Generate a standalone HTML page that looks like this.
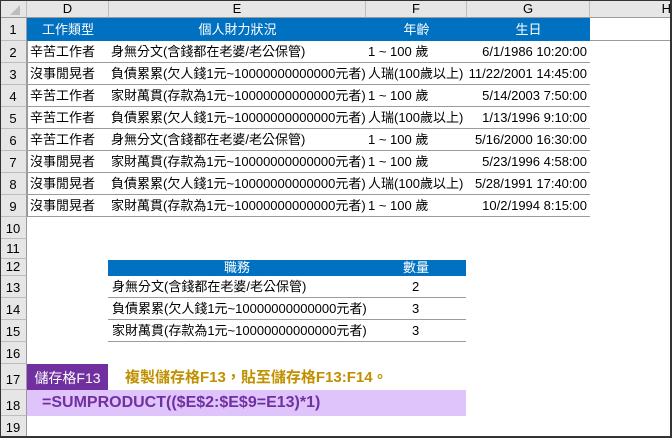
<!DOCTYPE html><html><head><meta charset="utf-8"><style>
*{margin:0;padding:0;box-sizing:border-box}
body{width:672px;height:438px;overflow:hidden;background:#fff;font-family:"Liberation Sans","Noto Sans CJK TC",sans-serif;font-size:13px;color:#000;position:relative}
.a{position:absolute;white-space:nowrap}
.ch{position:absolute;top:0;height:18px;background:#e6e6e6;border-right:1px solid #bdbdbd;border-bottom:1px solid #9b9b9b;text-align:center;line-height:18px;font-size:13px}
.rh{position:absolute;left:0;width:27px;background:#e6e6e6;border-bottom:1px solid #bdbdbd;border-right:1px solid #9b9b9b;text-align:center;font-size:13px;padding-top:4px}
.row{position:absolute;left:27px;width:563px;border-bottom:1px solid #9b9b9b;height:22px}
.c{position:absolute;line-height:22px;white-space:nowrap}
</style></head><body>
<div class="ch" style="left:0;width:27px"><svg width="27" height="18"><polygon points="20,5 20,15 10,15" fill="#bdbdbd"/></svg></div>
<div class="ch" style="left:27px;width:82px">D</div>
<div class="ch" style="left:109px;width:257px">E</div>
<div class="ch" style="left:366px;width:101px">F</div>
<div class="ch" style="left:467px;width:123px">G</div>
<div class="ch" style="left:590px;width:82px;text-align:right;padding-right:0">H</div>

<div style="position:absolute;left:27px;top:18px;width:563px;height:23px;background:#0070c0;color:#fff">
<span class="c" style="left:0;width:82px;text-align:center;top:1px">工作類型</span>
<span class="c" style="left:82px;width:257px;text-align:center;top:1px">個人財力狀況</span>
<span class="c" style="left:339px;width:101px;text-align:center;top:1px">年齡</span>
<span class="c" style="left:440px;width:123px;text-align:center;top:1px">生日</span>
</div>
<div class="a" style="left:590px;top:40px;width:82px;border-bottom:1px solid #9b9b9b"></div>
<div class="a" style="left:27px;top:41px;width:1px;height:176px;background:#9b9b9b"></div>

<div class="row" style="top:41px"><span class="c" style="left:3px">辛苦工作者</span><span class="c" style="left:84px">身無分文(含錢都在老婆/老公保管)</span><span class="c" style="left:341px">1 ~ 100 歲</span><span class="c" style="right:3px">6/1/1986 10:20:00</span></div>
<div class="row" style="top:63px"><span class="c" style="left:3px">沒事閒晃者</span><span class="c" style="left:84px">負債累累(欠人錢1元~10000000000000元者)</span><span class="c" style="left:341px">人瑞(100歲以上)</span><span class="c" style="right:3px">11/22/2001 14:45:00</span></div>
<div class="row" style="top:85px"><span class="c" style="left:3px">辛苦工作者</span><span class="c" style="left:84px">家財萬貫(存款為1元~10000000000000元者)</span><span class="c" style="left:341px">1 ~ 100 歲</span><span class="c" style="right:3px">5/14/2003 7:50:00</span></div>
<div class="row" style="top:107px"><span class="c" style="left:3px">辛苦工作者</span><span class="c" style="left:84px">負債累累(欠人錢1元~10000000000000元者)</span><span class="c" style="left:341px">人瑞(100歲以上)</span><span class="c" style="right:3px">1/13/1996 9:10:00</span></div>
<div class="row" style="top:129px"><span class="c" style="left:3px">辛苦工作者</span><span class="c" style="left:84px">身無分文(含錢都在老婆/老公保管)</span><span class="c" style="left:341px">1 ~ 100 歲</span><span class="c" style="right:3px">5/16/2000 16:30:00</span></div>
<div class="row" style="top:151px"><span class="c" style="left:3px">沒事閒晃者</span><span class="c" style="left:84px">家財萬貫(存款為1元~10000000000000元者)</span><span class="c" style="left:341px">1 ~ 100 歲</span><span class="c" style="right:3px">5/23/1996 4:58:00</span></div>
<div class="row" style="top:173px"><span class="c" style="left:3px">沒事閒晃者</span><span class="c" style="left:84px">負債累累(欠人錢1元~10000000000000元者)</span><span class="c" style="left:341px">人瑞(100歲以上)</span><span class="c" style="right:3px">5/28/1991 17:40:00</span></div>
<div class="row" style="top:195px"><span class="c" style="left:3px">沒事閒晃者</span><span class="c" style="left:84px">家財萬貫(存款為1元~10000000000000元者)</span><span class="c" style="left:341px">1 ~ 100 歲</span><span class="c" style="right:3px">10/2/1994 8:15:00</span></div>

<div class="rh" style="top:18px;height:23px">1</div>
<div class="rh" style="top:41px;height:22px">2</div>
<div class="rh" style="top:63px;height:22px">3</div>
<div class="rh" style="top:85px;height:22px">4</div>
<div class="rh" style="top:107px;height:22px">5</div>
<div class="rh" style="top:129px;height:22px">6</div>
<div class="rh" style="top:151px;height:22px">7</div>
<div class="rh" style="top:173px;height:22px">8</div>
<div class="rh" style="top:195px;height:22px">9</div>
<div class="rh" style="top:217px;height:22px">10</div>
<div class="rh" style="top:239px;height:20px;padding-top:2px">11</div>
<div class="rh" style="top:259px;height:17px;padding-top:0">12</div>
<div class="rh" style="top:276px;height:22px">13</div>
<div class="rh" style="top:298px;height:22px">14</div>
<div class="rh" style="top:320px;height:22px">15</div>
<div class="rh" style="top:342px;height:22px">16</div>
<div class="rh" style="top:364px;height:26px;padding-top:8px">17</div>
<div class="rh" style="top:390px;height:26px;padding-top:8px">18</div>
<div class="rh" style="top:416px;height:22px">19</div>

<div class="a" style="left:108px;top:260px;width:358px;height:16px;background:#0070c0;color:#fff;line-height:16px">
<span class="a" style="left:0;width:258px;text-align:center">職務</span><span class="a" style="left:265px;width:86px;text-align:center">數量</span></div>
<div class="row" style="left:108px;width:358px;top:276px"><span class="c" style="left:4px">身無分文(含錢都在老婆/老公保管)</span><span class="c" style="left:304px">2</span></div>
<div class="row" style="left:108px;width:358px;top:298px"><span class="c" style="left:4px">負債累累(欠人錢1元~10000000000000元者)</span><span class="c" style="left:304px">3</span></div>
<div class="row" style="left:108px;width:358px;top:320px"><span class="c" style="left:4px">家財萬貫(存款為1元~10000000000000元者)</span><span class="c" style="left:304px">3</span></div>

<div class="a" style="left:27px;top:364px;width:81px;height:26px;background:#7030a0;color:#fff;font-size:14px;line-height:28px;text-align:center">儲存格F13</div>
<div class="a" style="left:125px;top:364px;height:26px;line-height:28px;color:#c09000;font-size:15px;font-weight:bold">複製儲存格F13，貼至儲存格F13:F14。</div>
<div class="a" style="left:27px;top:390px;width:439px;height:26px;background:#dfc3fb;color:#7030a0;font-weight:bold;font-size:16px;line-height:26px;padding-left:15px">=SUMPRODUCT(($E$2:$E$9=E13)*1)</div>

<div class="a" style="left:0;top:0;width:672px;height:438px;border:1px solid #333;border-bottom:2px solid #333;border-right:2px solid #333"></div>
</body></html>
